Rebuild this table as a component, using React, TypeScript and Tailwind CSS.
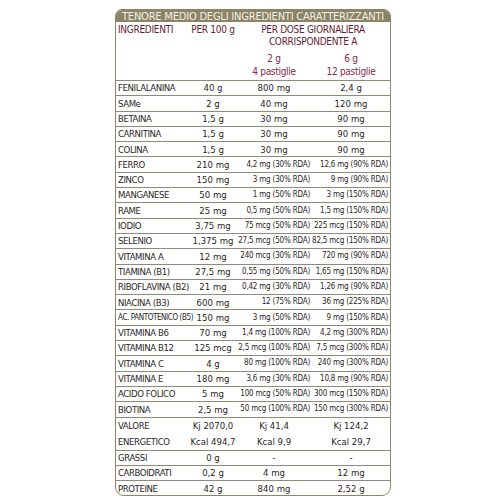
const rows: [string, string, string, string][] = [
  ["FENILALANINA", "40 g", "800 mg", "2,4 g"],
  ["SAMe", "2 g", "40 mg", "120 mg"],
  ["BETAINA", "1,5 g", "30 mg", "90 mg"],
  ["CARNITINA", "1,5 g", "30 mg", "90 mg"],
  ["COLINA", "1,5 g", "30 mg", "90 mg"],
  ["FERRO", "210 mg", "4,2 mg (30% RDA)", "12,6 mg (90% RDA)"],
  ["ZINCO", "150 mg", "3 mg (30% RDA)", "9 mg (90% RDA)"],
  ["MANGANESE", "50 mg", "1 mg (50% RDA)", "3 mg (150% RDA)"],
  ["RAME", "25 mg", "0,5 mg (50% RDA)", "1,5 mg (150% RDA)"],
  ["IODIO", "3,75 mg", "75 mcg (50% RDA)", "225 mcg (150% RDA)"],
  ["SELENIO", "1,375 mg", "27,5 mcg (50% RDA)", "82,5 mcg (150% RDA)"],
  ["VITAMINA A", "12 mg", "240 mcg (30% RDA)", "720 mg (90% RDA)"],
  ["TIAMINA (B1)", "27,5 mg", "0,55 mg (50% RDA)", "1,65 mg (150% RDA)"],
  ["RIBOFLAVINA (B2)", "21 mg", "0,42 mg (30% RDA)", "1,26 mg (90% RDA)"],
  ["NIACINA (B3)", "600 mg", "12 (75% RDA)", "36 mg (225% RDA)"],
  ["AC. PANTOTENICO (B5)", "150 mg", "3 mg (50% RDA)", "9 mg (150% RDA)"],
  ["VITAMINA B6", "70 mg", "1,4 mg (100% RDA)", "4,2 mg (300% RDA)"],
  ["VITAMINA B12", "125 mcg", "2,5 mcg (100% RDA)", "7,5 mcg (300% RDA)"],
  ["VITAMINA C", "4 g", "80 mg (100% RDA)", "240 mg (300% RDA)"],
  ["VITAMINA E", "180 mg", "3,6 mg (30% RDA)", "10,8 mg (90% RDA)"],
  ["ACIDO FOLICO", "5 mg", "100 mcg (50% RDA)", "300 mcg (150% RDA)"],
  ["BIOTINA", "2,5 mg", "50 mcg (100% RDA)", "150 mcg (300% RDA)"],
];

const tail: [string, string, string, string][] = [
  ["GRASSI", "0 g", "-", "-"],
  ["CARBOIDRATI", "0,2 g", "4 mg", "12 mg"],
  ["PROTEINE", "42 g", "840 mg", "2,52 g"],
];

const cols = "grid grid-cols-[74px_46px_76px_78px]";

// values with an RDA note sit right, the rest are centred
const Value = ({ v }: { v: string }) => {
  if (v.includes("RDA")) {
    return <div className="text-right pr-[2px] text-[8px] tracking-[-0.2px] whitespace-nowrap">{v}</div>;
  }
  return <div className="text-center whitespace-nowrap">{v}</div>;
};

const Row = ({ r }: { r: [string, string, string, string] }) => (
  <div className={`${cols} h-[15.3px] items-center border-t border-[#8f8b78]`}>
    <div
      className={`pl-[2px] whitespace-nowrap ${
        r[0].startsWith("AC.") ? "text-[8px] tracking-[-0.4px]" : "tracking-[-0.4px]"
      }`}
    >
      {r[0]}
    </div>
    <div className="text-center whitespace-nowrap">{r[1]}</div>
    <Value v={r[2]} />
    <Value v={r[3]} />
  </div>
);

export default function App() {
  return (
    <div
      className="w-[500px] h-[500px] bg-white pl-[115px] pt-[9px]"
      style={{ fontFamily: '"Liberation Sans Narrow", "DejaVu Sans Condensed", "Liberation Sans", sans-serif' }}
    >
      <div className="w-[276px] border border-[#8b8466] rounded-t-[7px] rounded-b-[9px] overflow-hidden text-[9.5px] text-[#2a2624] leading-none">
        {/* title bar */}
        <div className="h-[12px] bg-[#8b8466] text-[#f4f0e4] text-[11px] flex items-center justify-center tracking-[-0.2px] whitespace-nowrap">
          TENORE MEDIO DEGLI INGREDIENTI CARATTERIZZANTI
        </div>

        {/* column headings */}
        <div className="h-[58px] pt-[2px] text-[#651d37] text-[10px] tracking-[-0.3px]">
          <div className={`${cols} h-[12px] items-center`}>
            <div className="pl-[2px]">INGREDIENTI</div>
            <div className="text-center whitespace-nowrap">PER 100 g</div>
            <div className="col-span-2 text-center">PER DOSE GIORNALIERA</div>
          </div>
          <div className={`${cols} h-[12px] items-center`}>
            <div />
            <div />
            <div className="col-span-2 text-center">CORRISPONDENTE A</div>
          </div>
          <div className={`${cols} h-[16px] items-end text-[#86284f]`}>
            <div />
            <div />
            <div className="text-center">2 g</div>
            <div className="text-center">6 g</div>
          </div>
          <div className={`${cols} h-[15px] items-center text-[#86284f]`}>
            <div />
            <div />
            <div className="text-center">4 pastiglie</div>
            <div className="text-center">12 pastiglie</div>
          </div>
        </div>

        {rows.map((r) => (
          <Row key={r[0]} r={r} />
        ))}

        {/* energy value spans two lines */}
        <div className={`${cols} border-t border-[#8f8b78]`}>
          {[
            ["VALORE", "ENERGETICO"],
            ["Kj 2070,0", "Kcal 494,7"],
            ["Kj 41,4", "Kcal 9,9"],
            ["Kj 124,2", "Kcal 29,7"],
          ].map((c, i) => (
            <div key={i} className={i === 0 ? "pl-[2px] tracking-[-0.4px]" : "text-center"}>
              <div className="h-[16px] flex items-center whitespace-nowrap">
                <span className="w-full">{c[0]}</span>
              </div>
              <div className="h-[16px] flex items-center whitespace-nowrap">
                <span className="w-full">{c[1]}</span>
              </div>
            </div>
          ))}
        </div>

        {tail.map((r) => (
          <Row key={r[0]} r={r} />
        ))}
      </div>
    </div>
  );
}
